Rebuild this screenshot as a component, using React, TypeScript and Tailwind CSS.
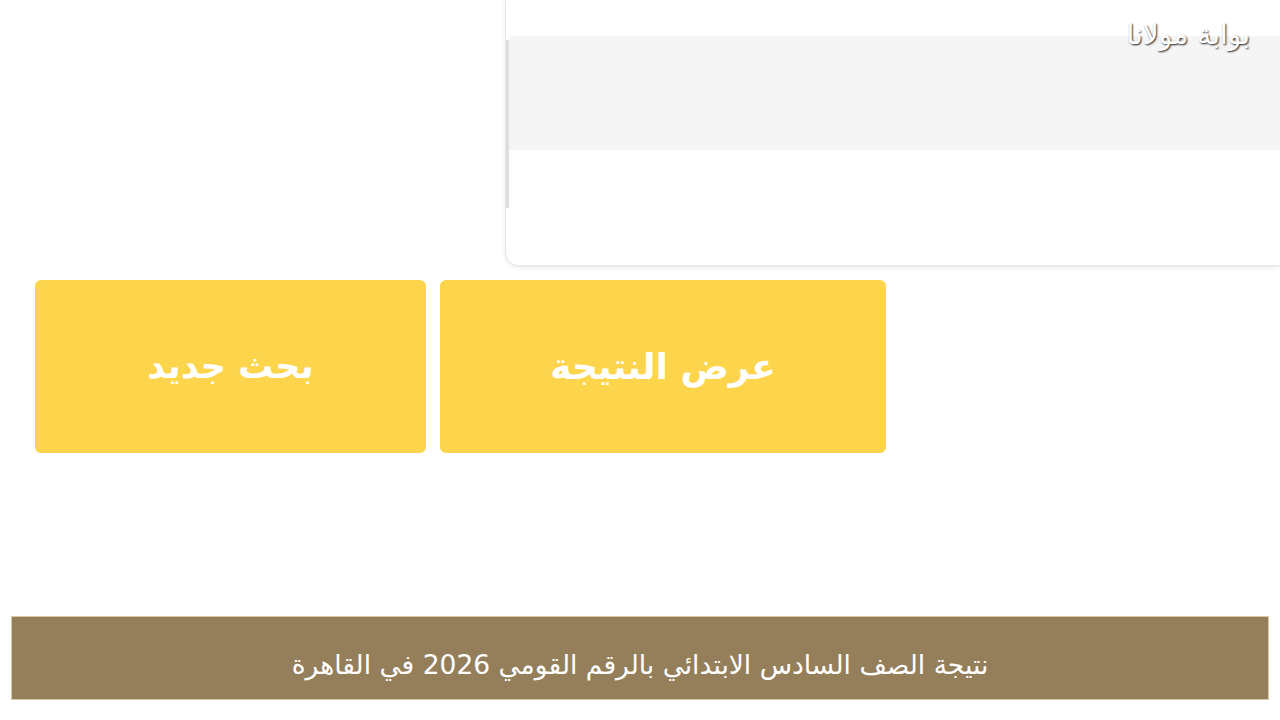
export default function App() {
  return (
    <div className="relative w-[1280px] h-[720px] overflow-hidden bg-white font-['DejaVu_Sans','Noto_Sans',sans-serif]">
      <div className="ml-[505px] h-[266px] flex rounded-bl-[14px] border-l border-b border-[#e6e6e6] bg-white shadow-[0_2px_4px_rgba(0,0,0,0.08)]">
        <div className="w-[3px] pt-[40px]">
          <div className="h-[168px] bg-[#dedede]" />
        </div>
        <div className="flex-1 flex flex-col">
          <div className="h-[36px]" />
          <div className="h-[114px] bg-[#f5f5f5]" />
        </div>
      </div>

      <div className="mt-[14px] pl-[35px] flex gap-[14px]">
        <button className="w-[391px] h-[173px] rounded-[6px] bg-[#fcd54c] text-white text-[35px] font-bold flex items-center justify-center">
          بحث جديد
        </button>
        <button className="w-[446px] h-[173px] rounded-[6px] bg-[#fcd54c] text-white text-[36px] font-bold flex items-center justify-center">
          عرض النتيجة
        </button>
      </div>

      <div className="mt-[163px] mx-[11px] h-[84px] border border-[#d9cba6] bg-[#957f5b] flex items-center justify-center pt-[14px]">
        <p dir="rtl" className="text-white text-[26.5px]">نتيجة الصف السادس الابتدائي بالرقم القومي 2026 في القاهرة</p>
      </div>

      <div dir="rtl" className="absolute top-[14px] right-[30px] text-white text-[28px] [text-shadow:1px_1px_2px_rgba(0,0,0,0.85)]">
        بوابة مولانا
      </div>
    </div>
  );
}
